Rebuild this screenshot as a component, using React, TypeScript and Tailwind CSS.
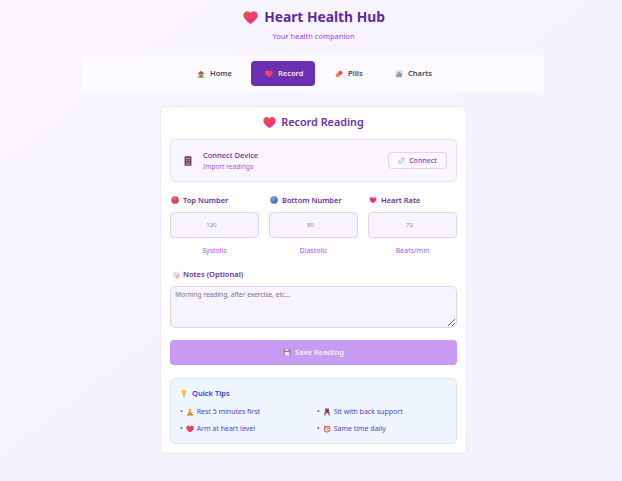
const font = { fontFamily: '"Noto Sans", sans-serif' };

const HEART = 'M8 14.9 C3.2 11.6 0.4 8.8 0.4 5.4 C0.4 3 2.3 1.2 4.6 1.2 C6 1.2 7.3 2 8 3.2 C8.7 2 10 1.2 11.4 1.2 C13.7 1.2 15.6 3 15.6 5.4 C15.6 8.8 12.8 11.6 8 14.9 Z';

function Icon({ name, size = 8 }: { name: string; size?: number }) {
  const common = { width: size, height: size, viewBox: '0 0 16 16', className: 'shrink-0' };
  switch (name) {
    case 'heart':
      return (
        <svg {...common}>
          <defs>
            <linearGradient id="hg" x1="0" y1="0" x2="0.6" y2="1">
              <stop offset="0" stopColor="#f4514f" />
              <stop offset="1" stopColor="#e8337f" />
            </linearGradient>
          </defs>
          <path d={HEART} fill="url(#hg)" />
        </svg>
      );
    case 'house':
      return (
        <svg {...common}>
          <rect x="3" y="7" width="10" height="8" fill="#c9a98a" />
          <path d="M1 8 L8 1.5 L15 8 Z" fill="#b5533c" />
          <rect x="6.5" y="10" width="3" height="5" fill="#5b8a4a" />
          <rect x="1" y="13.5" width="14" height="1.5" fill="#6aa35a" />
        </svg>
      );
    case 'pill':
      return (
        <svg {...common}>
          <g transform="rotate(-40 8 8)">
            <rect x="0.5" y="4" width="8" height="8" rx="4" fill="#f0913f" />
            <rect x="7.5" y="4" width="8" height="8" rx="4" fill="#ec3f74" />
          </g>
        </svg>
      );
    case 'chart':
      return (
        <svg {...common}>
          <rect x="1" y="1" width="14" height="14" rx="1.5" fill="#d9dbe3" />
          <rect x="3" y="8" width="2.6" height="6" fill="#47b26b" />
          <rect x="6.7" y="4" width="2.6" height="10" fill="#e0457f" />
          <rect x="10.4" y="6.5" width="2.6" height="7.5" fill="#4f86d9" />
        </svg>
      );
    case 'device':
      return (
        <svg {...common}>
          <rect x="2.5" y="0.5" width="11" height="15" rx="1.2" fill="#5a3f86" />
          <rect x="4.5" y="3" width="7" height="2.2" fill="#e9823e" />
          <rect x="4.5" y="6" width="7" height="2.2" fill="#3f9d8a" />
          <rect x="4.5" y="9" width="7" height="2.2" fill="#d5455f" />
          <rect x="4.5" y="12" width="7" height="1.6" fill="#e0b33f" />
        </svg>
      );
    case 'link':
      return (
        <svg {...common} fill="none" stroke="#a7a7ad" strokeWidth="2" strokeLinecap="round">
          <path d="M6.5 9.5 L9.5 6.5" />
          <path d="M7 4.5 L9 2.7 A3 3 0 0 1 13.3 7 L11.5 9" />
          <path d="M9 11.5 L7 13.3 A3 3 0 0 1 2.7 9 L4.5 7" />
        </svg>
      );
    case 'red':
    case 'blue':
      return (
        <svg {...common}>
          <defs>
            <radialGradient id={`s${name}`} cx="0.38" cy="0.32" r="0.75">
              <stop offset="0" stopColor={name === 'red' ? '#ee6f7d' : '#7f9ff0'} />
              <stop offset="1" stopColor={name === 'red' ? '#bf2c47' : '#3f5bb8'} />
            </radialGradient>
          </defs>
          <circle cx="8" cy="8" r="7.5" fill={`url(#s${name})`} />
        </svg>
      );
    case 'beat':
      return (
        <svg {...common}>
          <path d={HEART} fill="#e8387a" transform="translate(1 1.6) scale(0.875)" />
          <path d="M0.5 3.4 L2.8 1 M15.5 3.4 L13.2 1" stroke="#ef6fa0" strokeWidth="1.4" />
        </svg>
      );
    case 'memo':
      return (
        <svg {...common}>
          <path d="M2 1 H10 L14 5 V15 H2 Z" fill="#ece9ee" />
          <rect x="4" y="5" width="6" height="1" fill="#c2bdc7" />
          <rect x="4" y="8" width="5" height="1" fill="#c2bdc7" />
          <path d="M7 13.5 L14 6.5 L15.5 8 L8.5 15 Z" fill="#ed8440" />
        </svg>
      );
    case 'floppy':
      return (
        <svg {...common}>
          <path d="M1.5 1.5 H12.5 L14.5 3.5 V14.5 H1.5 Z" fill="#8b7f96" />
          <rect x="4.5" y="1.5" width="6.5" height="4.5" fill="#d9d4dd" />
          <rect x="3.5" y="8.5" width="9" height="6" fill="#f8f3fb" />
        </svg>
      );
    case 'bulb':
      return (
        <svg {...common}>
          <circle cx="8" cy="6" r="5" fill="#f6c945" />
          <rect x="6" y="10" width="4" height="3" fill="#f0b93a" />
          <rect x="6.3" y="13" width="3.4" height="2" fill="#8d8b99" />
        </svg>
      );
    case 'person':
      return (
        <svg {...common}>
          <circle cx="8" cy="3.6" r="2.4" fill="#e4a63f" />
          <path d="M5.5 6.5 H10.5 L12 12 H4 Z" fill="#eb9a2e" />
          <path d="M1.5 15 C2 12 5 11 8 11 C11 11 14 12 14.5 15 Z" fill="#d77f2a" />
        </svg>
      );
    case 'chair':
      return (
        <svg {...common}>
          <rect x="4" y="1" width="8" height="7" rx="1.5" fill="#7b4a48" />
          <rect x="3" y="8" width="10" height="2.5" fill="#8f5754" />
          <rect x="3" y="10" width="2" height="5" fill="#6a3f3e" />
          <rect x="11" y="10" width="2" height="5" fill="#6a3f3e" />
        </svg>
      );
    case 'clock':
      return (
        <svg {...common}>
          <circle cx="3.5" cy="3" r="2.2" fill="#e98a8f" />
          <circle cx="12.5" cy="3" r="2.2" fill="#e98a8f" />
          <circle cx="8" cy="8.5" r="6.5" fill="#e4566d" />
          <circle cx="8" cy="8.5" r="4.4" fill="#f8e6d8" />
          <path d="M8 5.5 V8.5 L10 9.5" stroke="#c73a55" strokeWidth="1.2" fill="none" />
        </svg>
      );
    default:
      return null;
  }
}

function Nav({ i, t, active, w }: { i: string; t: string; active?: boolean; w: string }) {
  return (
    <div className={`flex h-[25px] items-center gap-[5px] rounded-[4px] pl-[14px] text-[7.5px] font-semibold ${w} ${active ? 'bg-[#6b2fb0] text-[#f3e8ff]' : 'text-[#4b4453]'}`}>
      <Icon name={i} />
      <span>{t}</span>
    </div>
  );
}

function Field({ i, label, value, hint }: { i: string; label: string; value: string; hint: string }) {
  return (
    <div className="flex flex-1 flex-col">
      <div className="flex h-[12px] items-center gap-[4px] pl-[1px] text-[7.5px] font-semibold text-[#6b2fa0]">
        <Icon name={i} />
        <span>{label}</span>
      </div>
      <div className="mt-[6px] flex h-[26px] items-center justify-center rounded-[4px] border border-[#e2cffb] bg-[#f8f4ff] pr-[6px] text-[6px] text-[#8a8a93]">{value}</div>
      <div className="mt-[8px] text-center text-[7px] text-[#a855f7]">{hint}</div>
    </div>
  );
}

function Tip({ i, t }: { i: string; t: string }) {
  return (
    <div className="flex h-[12px] items-center text-[7px] text-[#4f46c5]">
      <span className="mr-[3px] text-[7px]">•</span>
      <span className="mr-[3px]"><Icon name={i} size={8} /></span>
      <span>{t}</span>
    </div>
  );
}

export default function App() {
  return (
    <div style={font} className="h-[481px] w-[622px] overflow-hidden bg-gradient-to-br from-[#fbf6ff] to-[#f2f1ff] pt-[8px]">
      <div className="ml-[6px] flex h-[18px] items-center justify-center gap-[6px] text-[13.8px] font-bold text-[#5f2a9e]">
        <Icon name="heart" size={15} />
        <span>Heart Health Hub</span>
      </div>
      <div className="ml-[5px] mt-[5px] text-center text-[7.5px] text-[#a03ff0]">Your health companion</div>
      <div className="ml-[82px] mt-[13px] flex h-[37px] w-[462px] items-center justify-center gap-[6px] rounded-[6px] bg-[#fdfbff] pl-[2px]">
        <Nav i="house" t="Home" w="w-[62px]" />
        <Nav i="heart" t="Record" active w="w-[64px]" />
        <Nav i="pill" t="Pills" w="w-[54px]" />
        <Nav i="chart" t="Charts" w="w-[64px]" />
      </div>
      <div className="ml-[160px] mt-[14px] h-[348px] w-[307px] rounded-[6px] border border-[#eee8fb] bg-white px-[9px] pt-[6px]">
        <div className="flex h-[18px] items-center justify-center gap-[5px] text-[10.8px] font-semibold text-[#6b2fa0]">
          <Icon name="heart" size={13} />
          <span>Record Reading</span>
        </div>
        <div className="mt-[8px] flex h-[43px] items-center justify-between rounded-[5px] border border-[#ecdcfd] bg-[#faf5ff] pl-[12px] pr-[9px]">
          <div className="flex items-center gap-[10px]">
            <Icon name="device" size={10} />
            <div>
              <div className="text-[7.5px] font-medium text-[#6b2fa0]">Connect Device</div>
              <div className="mt-[1px] text-[6.6px] text-[#a855f7]">Import readings</div>
            </div>
          </div>
          <div className="flex h-[17px] w-[59px] items-center justify-center gap-[4px] rounded-[4px] border border-[#e2cffb] bg-[#fbf8ff] text-[7px] font-medium text-[#9333ea]">
            <Icon name="link" size={7} />
            <span>Connect</span>
          </div>
        </div>
        <div className="mt-[12px] flex gap-[10px]">
          <Field i="red" label="Top Number" value="120" hint="Systolic" />
          <Field i="blue" label="Bottom Number" value="80" hint="Diastolic" />
          <Field i="beat" label="Heart Rate" value="72" hint="Beats/min" />
        </div>
        <div className="mt-[12px] flex h-[12px] items-center gap-[3px] pl-[2px] text-[7.5px] font-semibold text-[#6b2fa0]">
          <Icon name="memo" />
          <span>Notes (Optional)</span>
        </div>
        <textarea
          readOnly
          placeholder="Morning reading, after exercise, etc..."
          className="mt-[5px] block h-[42px] w-full rounded-[5px] border border-[#e2cffb] bg-[#f8f4ff] px-[4px] py-[3px] text-[6.6px] placeholder:text-[#77727f]"
        />
        <div className="mt-[12px] flex h-[25px] items-center justify-center gap-[4px] rounded-[4px] bg-[#c79bf1] text-[7.5px] font-semibold text-[#f8f1ff]">
          <Icon name="floppy" />
          <span>Save Reading</span>
        </div>
        <div className="mt-[13px] h-[66px] rounded-[5px] border border-[#dbe4fb] bg-[#eff6ff] px-[9px] pt-[9px]">
          <div className="flex items-center gap-[4px] text-[7.5px] font-semibold text-[#4338ca]">
            <Icon name="bulb" />
            <span>Quick Tips</span>
          </div>
          <div className="mt-[7px] grid grid-cols-2 gap-x-[7px] gap-y-[5px]">
            <Tip i="person" t="Rest 5 minutes first" />
            <Tip i="chair" t="Sit with back support" />
            <Tip i="heart" t="Arm at heart level" />
            <Tip i="clock" t="Same time daily" />
          </div>
        </div>
      </div>
    </div>
  );
}
